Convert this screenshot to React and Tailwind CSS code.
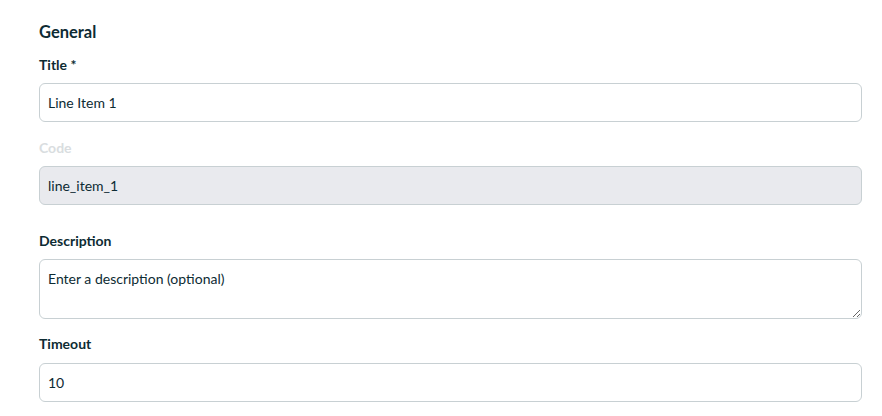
import React from "react";

const LABEL = "block text-[14px] leading-5 font-bold text-[#0d2b33] mb-2";
const INPUT =
  "block w-full h-[39px] px-2 rounded-md border border-[#c8d0d3] bg-white text-[14px] text-[#0d2b33] outline-none";

export default function App() {
  return (
    <div
      className="min-h-screen bg-white pl-[39px] pr-[20px] pt-[22px]"
      style={{ fontFamily: "Lato, 'Noto Sans', sans-serif" }}
    >
      {/* General */}
      <h2 className="text-[16.5px] leading-5 font-bold text-[#0d2b33] mb-[13px]">General</h2>

      <div className="mb-4">
        <label className={LABEL}>Title *</label>
        <input className={INPUT} defaultValue="Line Item 1" />
      </div>

      <div className="mb-[26px]">
        <label className="block text-[14px] leading-5 font-bold text-[#d9dde0] mb-2">Code</label>
        <input
          className="block w-full h-[39px] px-2 rounded-md border border-[#c8d0d3] bg-[#e9eaee] text-[14px] text-[#0d2b33] outline-none"
          defaultValue="line_item_1"
          disabled
        />
      </div>

      <div className="mb-[15px]">
        <label className={LABEL}>Description</label>
        <textarea
          className="block w-full h-[60px] px-2 py-[9px] leading-5 rounded-md border border-[#c8d0d3] bg-white text-[14px] text-[#0d2b33] placeholder:text-[#0d2b33] outline-none"
          placeholder="Enter a description (optional)"
        />
      </div>

      <div>
        <label className="block text-[14px] leading-5 font-bold text-[#0d2b33] mb-[9px]">Timeout</label>
        <input className={INPUT} defaultValue="10" />
      </div>
    </div>
  );
}
